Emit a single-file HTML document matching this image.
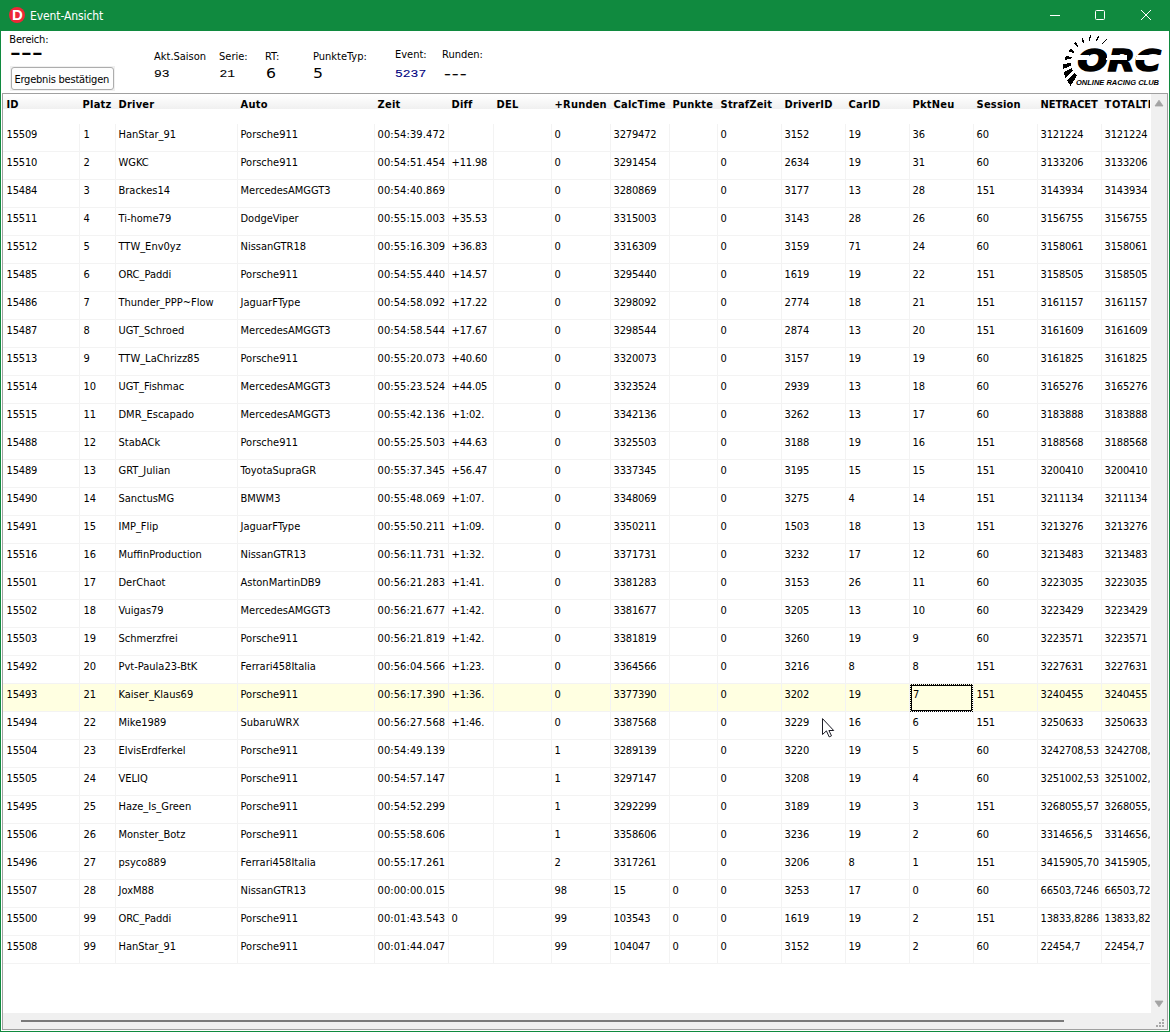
<!DOCTYPE html>
<html lang="de"><head><meta charset="utf-8"><title>Event-Ansicht</title>
<style>
html,body{margin:0;padding:0;}
body{width:1170px;height:1032px;overflow:hidden;background:#fff;font-family:"DejaVu Sans Condensed", "Liberation Sans", sans-serif;font-size:11px;color:#000;position:relative;}
#win{position:absolute;left:0;top:0;width:1170px;height:1032px;background:#108a3f;}
#client{position:absolute;left:1px;top:31px;width:1168px;height:1000px;background:#fff;}
#title{position:absolute;left:30px;top:8px;letter-spacing:-0.1px;font-size:12px;color:#fff;line-height:16px;white-space:nowrap;}
#icon{position:absolute;left:9px;top:7px;width:16px;height:16px;}
.cap{position:absolute;top:0;height:30px;width:46px;}
.lbl{position:absolute;white-space:nowrap;line-height:13px;font-size:11px;}
.mono{position:absolute;white-space:nowrap;font-family:"Liberation Mono",monospace;font-size:13px;line-height:14px;transform:scaleY(0.9);transform-origin:0 100%;-webkit-text-stroke:0.12px;}
.verd{position:absolute;white-space:nowrap;font-family:"DejaVu Sans",sans-serif;font-size:14px;line-height:16px;transform:scaleX(1.12);transform-origin:0 0;}
#btnwrap{position:absolute;left:10px;top:66px;width:105px;height:25px;background:#f0f0f0;}
#btn{position:absolute;left:1px;top:1px;width:101px;height:21px;border:1px solid #adadad;border-radius:3px;background:#fdfdfd;font-size:11px;line-height:23px;text-align:center;white-space:nowrap;letter-spacing:-0.22px;text-indent:-1.5px;}
#gridframe{position:absolute;left:2px;top:93px;width:1166px;height:937px;background:#f0f0f0;border-left:1px solid #a0a0a0;border-top:1px solid #a0a0a0;border-right:1px solid #a0a0a0;border-bottom:1px solid #a0a0a0;box-sizing:border-box;}
#grid{position:absolute;left:3px;top:94px;width:1148px;height:919px;background:#fff;}
#gridc{position:absolute;left:0;top:0;width:1147px;height:919px;overflow:hidden;}
#hdr{position:absolute;left:0;top:0;width:1147px;height:15px;background:linear-gradient(#fff 0,#fdfdfd 20%,#f0f0f0 100%);}
.h{position:absolute;top:0;height:16px;line-height:21px;font-weight:bold;font-size:11px;white-space:nowrap;overflow:hidden;box-sizing:border-box;padding-left:2.6px;letter-spacing:0.2px;}
.r{position:absolute;left:0;width:1163px;height:27px;border-bottom:1px solid #f3f3f3;}
.r.sel{background:#ffffe1;}
.n{letter-spacing:-0.15px;}
.c{position:absolute;top:0;height:27px;line-height:21px;padding-top:0;box-sizing:border-box;border-right:1px solid #f3f3f3;padding-left:2.5px;white-space:nowrap;overflow:hidden;}
#focus{position:absolute;}
</style></head>
<body>
<div id="win">
<svg id="icon" viewBox="0 0 16 16"><circle cx="8" cy="8" r="8" fill="#ee2737"/><text x="8.3" y="13" text-anchor="middle" font-family="Liberation Sans, sans-serif" font-weight="bold" font-size="14" textLength="10.8" lengthAdjust="spacingAndGlyphs" fill="#fff">D</text></svg>
<div id="title">Event-Ansicht</div>
<svg class="cap" style="left:1032px" viewBox="0 0 46 30"><path d="M18 15.5h10" stroke="#fff" stroke-width="1" fill="none"/></svg>
<svg class="cap" style="left:1078px" viewBox="0 0 46 30"><rect x="17.5" y="10.5" width="9" height="9" rx="1" stroke="#fff" stroke-width="1" fill="none"/></svg>
<svg class="cap" style="left:1124px" viewBox="0 0 46 30"><path d="M17 10l10 10M27 10l-10 10" stroke="#fff" stroke-width="1" fill="none"/></svg>
<div id="client"></div>
<div class="lbl" style="left:9.3px;top:33px;letter-spacing:-0.2px">Bereich:</div>
<div class="mono" style="left:7px;top:43.5px;font-size:18px;font-weight:bold;line-height:20px;transform:scaleX(1.55);transform-origin:0 0;letter-spacing:-3.7px">---</div>
<div id="btnwrap"><div id="btn">Ergebnis bestätigen</div></div>
<div class="lbl" style="left:154px;top:50px">Akt.Saison</div>
<div class="mono" style="left:154px;top:67.1px">93</div>
<div class="lbl" style="left:219px;top:50px">Serie:</div>
<div class="mono" style="left:219.5px;top:67.1px">21</div>
<div class="lbl" style="left:265px;top:50px">RT:</div>
<div class="verd" style="left:266px;top:65px">6</div>
<div class="lbl" style="left:313px;top:50px">PunkteTyp:</div>
<div class="verd" style="left:313px;top:65px">5</div>
<div class="lbl" style="left:395px;top:48px">Event:</div>
<div class="mono" style="left:395px;top:67.1px;color:#000080">5237</div>
<div class="lbl" style="left:442px;top:48px">Runden:</div>
<div class="mono" style="left:441.5px;top:68px;transform:scaleX(1.4);transform-origin:0 0;letter-spacing:-2.2px">---</div>
<svg id="logo" style="position:absolute;left:1056px;top:32px;width:112px;height:60px" viewBox="0 0 112 60" shape-rendering="crispEdges">
<path d="M11.0 48.6L18.0 41.0L21.1 43.3L14.6 53.9ZM7.9 40.4L15.5 36.0L17.1 38.5L9.3 45.8ZM7.1 32.3L14.8 30.9L15.0 33.6L7.2 37.0ZM9.0 25.3L11.3 24.0L15.9 25.2L14.9 26.7L9.0 27.8ZM13.0 17.7L15.5 17.0L18.0 19.4L17.7 20.9L13.1 19.4ZM18.0 11.2L20.3 10.1L22.1 14.6L21.1 15.1ZM26.0 6.1L27.1 6.1L28.1 10.4L27.2 10.7L26.0 9.0ZM34.0 2.9L35.1 3.1L34.1 8.7L32.9 8.7ZM42.0 3.9L43.1 4.4L41.0 8.7L39.9 8.4ZM50.4 6.9L51.2 7.4L46.4 12.1L45.8 11.5Z" fill="#000"/>
<text x="21.5" y="39.4" font-family="DejaVu Sans, sans-serif" font-weight="bold" font-style="oblique" font-size="30.4" textLength="83.5" lengthAdjust="spacingAndGlyphs" fill="#000" stroke="#000" stroke-width="1.5">ORC</text>
<path d="M19 27.8L32 27.8L33.2 22.8L20.5 22.8Z M50 27.8L70.5 27.8L71.5 22.8L51.5 22.8Z M80 27.8L106 27.8L107 22.8L81 22.8Z" fill="#fff"/>
<text x="20" y="52.6" font-family="Liberation Sans, sans-serif" font-weight="bold" font-style="italic" font-size="7.2" textLength="83" lengthAdjust="spacingAndGlyphs" fill="#000">ONLINE RACING CLUB</text>
</svg>
<div id="gridframe"></div>
<div id="grid"><div id="gridc">
<div id="hdr">
<div class="h" style="left:0px;width:77px;padding-left:3.4px">ID</div>
<div class="h" style="left:77px;width:36px">Platz</div>
<div class="h" style="left:113px;width:122px">Driver</div>
<div class="h" style="left:235px;width:137px">Auto</div>
<div class="h" style="left:372px;width:74px">Zeit</div>
<div class="h" style="left:446px;width:45px">Diff</div>
<div class="h" style="left:491px;width:58px">DEL</div>
<div class="h" style="left:549px;width:59px">+Runden</div>
<div class="h" style="left:608px;width:59px">CalcTime</div>
<div class="h" style="left:667px;width:48px">Punkte</div>
<div class="h" style="left:715px;width:64px">StrafZeit</div>
<div class="h" style="left:779px;width:64px">DriverID</div>
<div class="h" style="left:843px;width:64px">CarID</div>
<div class="h" style="left:907px;width:64px">PktNeu</div>
<div class="h" style="left:971px;width:64px">Session</div>
<div class="h" style="left:1035px;width:64px;letter-spacing:-0.1px">NETRACET</div>
<div class="h" style="left:1099px;width:64px;letter-spacing:0.55px">TOTALTIME</div>
</div>
<div class="r" style="top:30px"><div class="c n" style="left:0px;width:77px;padding-left:3.5px">15509</div><div class="c n" style="left:77px;width:36px;padding-left:3.5px">1</div><div class="c" style="left:113px;width:122px">HanStar_91</div><div class="c" style="left:235px;width:137px">Porsche911</div><div class="c" style="left:372px;width:74px;letter-spacing:0.1px">00:54:39.472</div><div class="c n" style="left:446px;width:45px"></div><div class="c n" style="left:491px;width:58px"></div><div class="c n" style="left:549px;width:59px">0</div><div class="c n" style="left:608px;width:59px">3279472</div><div class="c n" style="left:667px;width:48px"></div><div class="c n" style="left:715px;width:64px">0</div><div class="c n" style="left:779px;width:64px">3152</div><div class="c n" style="left:843px;width:64px">19</div><div class="c n" style="left:907px;width:64px">36</div><div class="c n" style="left:971px;width:64px">60</div><div class="c n" style="left:1035px;width:64px">3121224</div><div class="c n" style="left:1099px;width:64px">3121224</div></div>
<div class="r" style="top:58px"><div class="c n" style="left:0px;width:77px;padding-left:3.5px">15510</div><div class="c n" style="left:77px;width:36px;padding-left:3.5px">2</div><div class="c" style="left:113px;width:122px">WGKC</div><div class="c" style="left:235px;width:137px">Porsche911</div><div class="c" style="left:372px;width:74px;letter-spacing:0.1px">00:54:51.454</div><div class="c n" style="left:446px;width:45px">+11.98</div><div class="c n" style="left:491px;width:58px"></div><div class="c n" style="left:549px;width:59px">0</div><div class="c n" style="left:608px;width:59px">3291454</div><div class="c n" style="left:667px;width:48px"></div><div class="c n" style="left:715px;width:64px">0</div><div class="c n" style="left:779px;width:64px">2634</div><div class="c n" style="left:843px;width:64px">19</div><div class="c n" style="left:907px;width:64px">31</div><div class="c n" style="left:971px;width:64px">60</div><div class="c n" style="left:1035px;width:64px">3133206</div><div class="c n" style="left:1099px;width:64px">3133206</div></div>
<div class="r" style="top:86px"><div class="c n" style="left:0px;width:77px;padding-left:3.5px">15484</div><div class="c n" style="left:77px;width:36px;padding-left:3.5px">3</div><div class="c" style="left:113px;width:122px">Brackes14</div><div class="c" style="left:235px;width:137px">MercedesAMGGT3</div><div class="c" style="left:372px;width:74px;letter-spacing:0.1px">00:54:40.869</div><div class="c n" style="left:446px;width:45px"></div><div class="c n" style="left:491px;width:58px"></div><div class="c n" style="left:549px;width:59px">0</div><div class="c n" style="left:608px;width:59px">3280869</div><div class="c n" style="left:667px;width:48px"></div><div class="c n" style="left:715px;width:64px">0</div><div class="c n" style="left:779px;width:64px">3177</div><div class="c n" style="left:843px;width:64px">13</div><div class="c n" style="left:907px;width:64px">28</div><div class="c n" style="left:971px;width:64px">151</div><div class="c n" style="left:1035px;width:64px">3143934</div><div class="c n" style="left:1099px;width:64px">3143934</div></div>
<div class="r" style="top:114px"><div class="c n" style="left:0px;width:77px;padding-left:3.5px">15511</div><div class="c n" style="left:77px;width:36px;padding-left:3.5px">4</div><div class="c" style="left:113px;width:122px">Ti-home79</div><div class="c" style="left:235px;width:137px">DodgeViper</div><div class="c" style="left:372px;width:74px;letter-spacing:0.1px">00:55:15.003</div><div class="c n" style="left:446px;width:45px">+35.53</div><div class="c n" style="left:491px;width:58px"></div><div class="c n" style="left:549px;width:59px">0</div><div class="c n" style="left:608px;width:59px">3315003</div><div class="c n" style="left:667px;width:48px"></div><div class="c n" style="left:715px;width:64px">0</div><div class="c n" style="left:779px;width:64px">3143</div><div class="c n" style="left:843px;width:64px">28</div><div class="c n" style="left:907px;width:64px">26</div><div class="c n" style="left:971px;width:64px">60</div><div class="c n" style="left:1035px;width:64px">3156755</div><div class="c n" style="left:1099px;width:64px">3156755</div></div>
<div class="r" style="top:142px"><div class="c n" style="left:0px;width:77px;padding-left:3.5px">15512</div><div class="c n" style="left:77px;width:36px;padding-left:3.5px">5</div><div class="c" style="left:113px;width:122px">TTW_Env0yz</div><div class="c" style="left:235px;width:137px">NissanGTR18</div><div class="c" style="left:372px;width:74px;letter-spacing:0.1px">00:55:16.309</div><div class="c n" style="left:446px;width:45px">+36.83</div><div class="c n" style="left:491px;width:58px"></div><div class="c n" style="left:549px;width:59px">0</div><div class="c n" style="left:608px;width:59px">3316309</div><div class="c n" style="left:667px;width:48px"></div><div class="c n" style="left:715px;width:64px">0</div><div class="c n" style="left:779px;width:64px">3159</div><div class="c n" style="left:843px;width:64px">71</div><div class="c n" style="left:907px;width:64px">24</div><div class="c n" style="left:971px;width:64px">60</div><div class="c n" style="left:1035px;width:64px">3158061</div><div class="c n" style="left:1099px;width:64px">3158061</div></div>
<div class="r" style="top:170px"><div class="c n" style="left:0px;width:77px;padding-left:3.5px">15485</div><div class="c n" style="left:77px;width:36px;padding-left:3.5px">6</div><div class="c" style="left:113px;width:122px">ORC_Paddi</div><div class="c" style="left:235px;width:137px">Porsche911</div><div class="c" style="left:372px;width:74px;letter-spacing:0.1px">00:54:55.440</div><div class="c n" style="left:446px;width:45px">+14.57</div><div class="c n" style="left:491px;width:58px"></div><div class="c n" style="left:549px;width:59px">0</div><div class="c n" style="left:608px;width:59px">3295440</div><div class="c n" style="left:667px;width:48px"></div><div class="c n" style="left:715px;width:64px">0</div><div class="c n" style="left:779px;width:64px">1619</div><div class="c n" style="left:843px;width:64px">19</div><div class="c n" style="left:907px;width:64px">22</div><div class="c n" style="left:971px;width:64px">151</div><div class="c n" style="left:1035px;width:64px">3158505</div><div class="c n" style="left:1099px;width:64px">3158505</div></div>
<div class="r" style="top:198px"><div class="c n" style="left:0px;width:77px;padding-left:3.5px">15486</div><div class="c n" style="left:77px;width:36px;padding-left:3.5px">7</div><div class="c" style="left:113px;width:122px">Thunder_PPP~Flow</div><div class="c" style="left:235px;width:137px">JaguarFType</div><div class="c" style="left:372px;width:74px;letter-spacing:0.1px">00:54:58.092</div><div class="c n" style="left:446px;width:45px">+17.22</div><div class="c n" style="left:491px;width:58px"></div><div class="c n" style="left:549px;width:59px">0</div><div class="c n" style="left:608px;width:59px">3298092</div><div class="c n" style="left:667px;width:48px"></div><div class="c n" style="left:715px;width:64px">0</div><div class="c n" style="left:779px;width:64px">2774</div><div class="c n" style="left:843px;width:64px">18</div><div class="c n" style="left:907px;width:64px">21</div><div class="c n" style="left:971px;width:64px">151</div><div class="c n" style="left:1035px;width:64px">3161157</div><div class="c n" style="left:1099px;width:64px">3161157</div></div>
<div class="r" style="top:226px"><div class="c n" style="left:0px;width:77px;padding-left:3.5px">15487</div><div class="c n" style="left:77px;width:36px;padding-left:3.5px">8</div><div class="c" style="left:113px;width:122px">UGT_Schroed</div><div class="c" style="left:235px;width:137px">MercedesAMGGT3</div><div class="c" style="left:372px;width:74px;letter-spacing:0.1px">00:54:58.544</div><div class="c n" style="left:446px;width:45px">+17.67</div><div class="c n" style="left:491px;width:58px"></div><div class="c n" style="left:549px;width:59px">0</div><div class="c n" style="left:608px;width:59px">3298544</div><div class="c n" style="left:667px;width:48px"></div><div class="c n" style="left:715px;width:64px">0</div><div class="c n" style="left:779px;width:64px">2874</div><div class="c n" style="left:843px;width:64px">13</div><div class="c n" style="left:907px;width:64px">20</div><div class="c n" style="left:971px;width:64px">151</div><div class="c n" style="left:1035px;width:64px">3161609</div><div class="c n" style="left:1099px;width:64px">3161609</div></div>
<div class="r" style="top:254px"><div class="c n" style="left:0px;width:77px;padding-left:3.5px">15513</div><div class="c n" style="left:77px;width:36px;padding-left:3.5px">9</div><div class="c" style="left:113px;width:122px">TTW_LaChrizz85</div><div class="c" style="left:235px;width:137px">Porsche911</div><div class="c" style="left:372px;width:74px;letter-spacing:0.1px">00:55:20.073</div><div class="c n" style="left:446px;width:45px">+40.60</div><div class="c n" style="left:491px;width:58px"></div><div class="c n" style="left:549px;width:59px">0</div><div class="c n" style="left:608px;width:59px">3320073</div><div class="c n" style="left:667px;width:48px"></div><div class="c n" style="left:715px;width:64px">0</div><div class="c n" style="left:779px;width:64px">3157</div><div class="c n" style="left:843px;width:64px">19</div><div class="c n" style="left:907px;width:64px">19</div><div class="c n" style="left:971px;width:64px">60</div><div class="c n" style="left:1035px;width:64px">3161825</div><div class="c n" style="left:1099px;width:64px">3161825</div></div>
<div class="r" style="top:282px"><div class="c n" style="left:0px;width:77px;padding-left:3.5px">15514</div><div class="c n" style="left:77px;width:36px;padding-left:3.5px">10</div><div class="c" style="left:113px;width:122px">UGT_Fishmac</div><div class="c" style="left:235px;width:137px">MercedesAMGGT3</div><div class="c" style="left:372px;width:74px;letter-spacing:0.1px">00:55:23.524</div><div class="c n" style="left:446px;width:45px">+44.05</div><div class="c n" style="left:491px;width:58px"></div><div class="c n" style="left:549px;width:59px">0</div><div class="c n" style="left:608px;width:59px">3323524</div><div class="c n" style="left:667px;width:48px"></div><div class="c n" style="left:715px;width:64px">0</div><div class="c n" style="left:779px;width:64px">2939</div><div class="c n" style="left:843px;width:64px">13</div><div class="c n" style="left:907px;width:64px">18</div><div class="c n" style="left:971px;width:64px">60</div><div class="c n" style="left:1035px;width:64px">3165276</div><div class="c n" style="left:1099px;width:64px">3165276</div></div>
<div class="r" style="top:310px"><div class="c n" style="left:0px;width:77px;padding-left:3.5px">15515</div><div class="c n" style="left:77px;width:36px;padding-left:3.5px">11</div><div class="c" style="left:113px;width:122px">DMR_Escapado</div><div class="c" style="left:235px;width:137px">MercedesAMGGT3</div><div class="c" style="left:372px;width:74px;letter-spacing:0.1px">00:55:42.136</div><div class="c n" style="left:446px;width:45px">+1:02.</div><div class="c n" style="left:491px;width:58px"></div><div class="c n" style="left:549px;width:59px">0</div><div class="c n" style="left:608px;width:59px">3342136</div><div class="c n" style="left:667px;width:48px"></div><div class="c n" style="left:715px;width:64px">0</div><div class="c n" style="left:779px;width:64px">3262</div><div class="c n" style="left:843px;width:64px">13</div><div class="c n" style="left:907px;width:64px">17</div><div class="c n" style="left:971px;width:64px">60</div><div class="c n" style="left:1035px;width:64px">3183888</div><div class="c n" style="left:1099px;width:64px">3183888</div></div>
<div class="r" style="top:338px"><div class="c n" style="left:0px;width:77px;padding-left:3.5px">15488</div><div class="c n" style="left:77px;width:36px;padding-left:3.5px">12</div><div class="c" style="left:113px;width:122px">StabACk</div><div class="c" style="left:235px;width:137px">Porsche911</div><div class="c" style="left:372px;width:74px;letter-spacing:0.1px">00:55:25.503</div><div class="c n" style="left:446px;width:45px">+44.63</div><div class="c n" style="left:491px;width:58px"></div><div class="c n" style="left:549px;width:59px">0</div><div class="c n" style="left:608px;width:59px">3325503</div><div class="c n" style="left:667px;width:48px"></div><div class="c n" style="left:715px;width:64px">0</div><div class="c n" style="left:779px;width:64px">3188</div><div class="c n" style="left:843px;width:64px">19</div><div class="c n" style="left:907px;width:64px">16</div><div class="c n" style="left:971px;width:64px">151</div><div class="c n" style="left:1035px;width:64px">3188568</div><div class="c n" style="left:1099px;width:64px">3188568</div></div>
<div class="r" style="top:366px"><div class="c n" style="left:0px;width:77px;padding-left:3.5px">15489</div><div class="c n" style="left:77px;width:36px;padding-left:3.5px">13</div><div class="c" style="left:113px;width:122px">GRT_Julian</div><div class="c" style="left:235px;width:137px">ToyotaSupraGR</div><div class="c" style="left:372px;width:74px;letter-spacing:0.1px">00:55:37.345</div><div class="c n" style="left:446px;width:45px">+56.47</div><div class="c n" style="left:491px;width:58px"></div><div class="c n" style="left:549px;width:59px">0</div><div class="c n" style="left:608px;width:59px">3337345</div><div class="c n" style="left:667px;width:48px"></div><div class="c n" style="left:715px;width:64px">0</div><div class="c n" style="left:779px;width:64px">3195</div><div class="c n" style="left:843px;width:64px">15</div><div class="c n" style="left:907px;width:64px">15</div><div class="c n" style="left:971px;width:64px">151</div><div class="c n" style="left:1035px;width:64px">3200410</div><div class="c n" style="left:1099px;width:64px">3200410</div></div>
<div class="r" style="top:394px"><div class="c n" style="left:0px;width:77px;padding-left:3.5px">15490</div><div class="c n" style="left:77px;width:36px;padding-left:3.5px">14</div><div class="c" style="left:113px;width:122px">SanctusMG</div><div class="c" style="left:235px;width:137px">BMWM3</div><div class="c" style="left:372px;width:74px;letter-spacing:0.1px">00:55:48.069</div><div class="c n" style="left:446px;width:45px">+1:07.</div><div class="c n" style="left:491px;width:58px"></div><div class="c n" style="left:549px;width:59px">0</div><div class="c n" style="left:608px;width:59px">3348069</div><div class="c n" style="left:667px;width:48px"></div><div class="c n" style="left:715px;width:64px">0</div><div class="c n" style="left:779px;width:64px">3275</div><div class="c n" style="left:843px;width:64px">4</div><div class="c n" style="left:907px;width:64px">14</div><div class="c n" style="left:971px;width:64px">151</div><div class="c n" style="left:1035px;width:64px">3211134</div><div class="c n" style="left:1099px;width:64px">3211134</div></div>
<div class="r" style="top:422px"><div class="c n" style="left:0px;width:77px;padding-left:3.5px">15491</div><div class="c n" style="left:77px;width:36px;padding-left:3.5px">15</div><div class="c" style="left:113px;width:122px">IMP_Flip</div><div class="c" style="left:235px;width:137px">JaguarFType</div><div class="c" style="left:372px;width:74px;letter-spacing:0.1px">00:55:50.211</div><div class="c n" style="left:446px;width:45px">+1:09.</div><div class="c n" style="left:491px;width:58px"></div><div class="c n" style="left:549px;width:59px">0</div><div class="c n" style="left:608px;width:59px">3350211</div><div class="c n" style="left:667px;width:48px"></div><div class="c n" style="left:715px;width:64px">0</div><div class="c n" style="left:779px;width:64px">1503</div><div class="c n" style="left:843px;width:64px">18</div><div class="c n" style="left:907px;width:64px">13</div><div class="c n" style="left:971px;width:64px">151</div><div class="c n" style="left:1035px;width:64px">3213276</div><div class="c n" style="left:1099px;width:64px">3213276</div></div>
<div class="r" style="top:450px"><div class="c n" style="left:0px;width:77px;padding-left:3.5px">15516</div><div class="c n" style="left:77px;width:36px;padding-left:3.5px">16</div><div class="c" style="left:113px;width:122px">MuffinProduction</div><div class="c" style="left:235px;width:137px">NissanGTR13</div><div class="c" style="left:372px;width:74px;letter-spacing:0.1px">00:56:11.731</div><div class="c n" style="left:446px;width:45px">+1:32.</div><div class="c n" style="left:491px;width:58px"></div><div class="c n" style="left:549px;width:59px">0</div><div class="c n" style="left:608px;width:59px">3371731</div><div class="c n" style="left:667px;width:48px"></div><div class="c n" style="left:715px;width:64px">0</div><div class="c n" style="left:779px;width:64px">3232</div><div class="c n" style="left:843px;width:64px">17</div><div class="c n" style="left:907px;width:64px">12</div><div class="c n" style="left:971px;width:64px">60</div><div class="c n" style="left:1035px;width:64px">3213483</div><div class="c n" style="left:1099px;width:64px">3213483</div></div>
<div class="r" style="top:478px"><div class="c n" style="left:0px;width:77px;padding-left:3.5px">15501</div><div class="c n" style="left:77px;width:36px;padding-left:3.5px">17</div><div class="c" style="left:113px;width:122px">DerChaot</div><div class="c" style="left:235px;width:137px">AstonMartinDB9</div><div class="c" style="left:372px;width:74px;letter-spacing:0.1px">00:56:21.283</div><div class="c n" style="left:446px;width:45px">+1:41.</div><div class="c n" style="left:491px;width:58px"></div><div class="c n" style="left:549px;width:59px">0</div><div class="c n" style="left:608px;width:59px">3381283</div><div class="c n" style="left:667px;width:48px"></div><div class="c n" style="left:715px;width:64px">0</div><div class="c n" style="left:779px;width:64px">3153</div><div class="c n" style="left:843px;width:64px">26</div><div class="c n" style="left:907px;width:64px">11</div><div class="c n" style="left:971px;width:64px">60</div><div class="c n" style="left:1035px;width:64px">3223035</div><div class="c n" style="left:1099px;width:64px">3223035</div></div>
<div class="r" style="top:506px"><div class="c n" style="left:0px;width:77px;padding-left:3.5px">15502</div><div class="c n" style="left:77px;width:36px;padding-left:3.5px">18</div><div class="c" style="left:113px;width:122px">Vuigas79</div><div class="c" style="left:235px;width:137px">MercedesAMGGT3</div><div class="c" style="left:372px;width:74px;letter-spacing:0.1px">00:56:21.677</div><div class="c n" style="left:446px;width:45px">+1:42.</div><div class="c n" style="left:491px;width:58px"></div><div class="c n" style="left:549px;width:59px">0</div><div class="c n" style="left:608px;width:59px">3381677</div><div class="c n" style="left:667px;width:48px"></div><div class="c n" style="left:715px;width:64px">0</div><div class="c n" style="left:779px;width:64px">3205</div><div class="c n" style="left:843px;width:64px">13</div><div class="c n" style="left:907px;width:64px">10</div><div class="c n" style="left:971px;width:64px">60</div><div class="c n" style="left:1035px;width:64px">3223429</div><div class="c n" style="left:1099px;width:64px">3223429</div></div>
<div class="r" style="top:534px"><div class="c n" style="left:0px;width:77px;padding-left:3.5px">15503</div><div class="c n" style="left:77px;width:36px;padding-left:3.5px">19</div><div class="c" style="left:113px;width:122px">Schmerzfrei</div><div class="c" style="left:235px;width:137px">Porsche911</div><div class="c" style="left:372px;width:74px;letter-spacing:0.1px">00:56:21.819</div><div class="c n" style="left:446px;width:45px">+1:42.</div><div class="c n" style="left:491px;width:58px"></div><div class="c n" style="left:549px;width:59px">0</div><div class="c n" style="left:608px;width:59px">3381819</div><div class="c n" style="left:667px;width:48px"></div><div class="c n" style="left:715px;width:64px">0</div><div class="c n" style="left:779px;width:64px">3260</div><div class="c n" style="left:843px;width:64px">19</div><div class="c n" style="left:907px;width:64px">9</div><div class="c n" style="left:971px;width:64px">60</div><div class="c n" style="left:1035px;width:64px">3223571</div><div class="c n" style="left:1099px;width:64px">3223571</div></div>
<div class="r" style="top:562px"><div class="c n" style="left:0px;width:77px;padding-left:3.5px">15492</div><div class="c n" style="left:77px;width:36px;padding-left:3.5px">20</div><div class="c" style="left:113px;width:122px">Pvt-Paula23-BtK</div><div class="c" style="left:235px;width:137px">Ferrari458Italia</div><div class="c" style="left:372px;width:74px;letter-spacing:0.1px">00:56:04.566</div><div class="c n" style="left:446px;width:45px">+1:23.</div><div class="c n" style="left:491px;width:58px"></div><div class="c n" style="left:549px;width:59px">0</div><div class="c n" style="left:608px;width:59px">3364566</div><div class="c n" style="left:667px;width:48px"></div><div class="c n" style="left:715px;width:64px">0</div><div class="c n" style="left:779px;width:64px">3216</div><div class="c n" style="left:843px;width:64px">8</div><div class="c n" style="left:907px;width:64px">8</div><div class="c n" style="left:971px;width:64px">151</div><div class="c n" style="left:1035px;width:64px">3227631</div><div class="c n" style="left:1099px;width:64px">3227631</div></div>
<div class="r sel" style="top:590px"><div class="c n" style="left:0px;width:77px;padding-left:3.5px">15493</div><div class="c n" style="left:77px;width:36px;padding-left:3.5px">21</div><div class="c" style="left:113px;width:122px">Kaiser_Klaus69</div><div class="c" style="left:235px;width:137px">Porsche911</div><div class="c" style="left:372px;width:74px;letter-spacing:0.1px">00:56:17.390</div><div class="c n" style="left:446px;width:45px">+1:36.</div><div class="c n" style="left:491px;width:58px"></div><div class="c n" style="left:549px;width:59px">0</div><div class="c n" style="left:608px;width:59px">3377390</div><div class="c n" style="left:667px;width:48px"></div><div class="c n" style="left:715px;width:64px">0</div><div class="c n" style="left:779px;width:64px">3202</div><div class="c n" style="left:843px;width:64px">19</div><div class="c n" style="left:907px;width:64px">7</div><div class="c n" style="left:971px;width:64px">151</div><div class="c n" style="left:1035px;width:64px">3240455</div><div class="c n" style="left:1099px;width:64px">3240455</div></div>
<div class="r" style="top:618px"><div class="c n" style="left:0px;width:77px;padding-left:3.5px">15494</div><div class="c n" style="left:77px;width:36px;padding-left:3.5px">22</div><div class="c" style="left:113px;width:122px">Mike1989</div><div class="c" style="left:235px;width:137px">SubaruWRX</div><div class="c" style="left:372px;width:74px;letter-spacing:0.1px">00:56:27.568</div><div class="c n" style="left:446px;width:45px">+1:46.</div><div class="c n" style="left:491px;width:58px"></div><div class="c n" style="left:549px;width:59px">0</div><div class="c n" style="left:608px;width:59px">3387568</div><div class="c n" style="left:667px;width:48px"></div><div class="c n" style="left:715px;width:64px">0</div><div class="c n" style="left:779px;width:64px">3229</div><div class="c n" style="left:843px;width:64px">16</div><div class="c n" style="left:907px;width:64px">6</div><div class="c n" style="left:971px;width:64px">151</div><div class="c n" style="left:1035px;width:64px">3250633</div><div class="c n" style="left:1099px;width:64px">3250633</div></div>
<div class="r" style="top:646px"><div class="c n" style="left:0px;width:77px;padding-left:3.5px">15504</div><div class="c n" style="left:77px;width:36px;padding-left:3.5px">23</div><div class="c" style="left:113px;width:122px">ElvisErdferkel</div><div class="c" style="left:235px;width:137px">Porsche911</div><div class="c" style="left:372px;width:74px;letter-spacing:0.1px">00:54:49.139</div><div class="c n" style="left:446px;width:45px"></div><div class="c n" style="left:491px;width:58px"></div><div class="c n" style="left:549px;width:59px">1</div><div class="c n" style="left:608px;width:59px">3289139</div><div class="c n" style="left:667px;width:48px"></div><div class="c n" style="left:715px;width:64px">0</div><div class="c n" style="left:779px;width:64px">3220</div><div class="c n" style="left:843px;width:64px">19</div><div class="c n" style="left:907px;width:64px">5</div><div class="c n" style="left:971px;width:64px">60</div><div class="c n" style="left:1035px;width:64px">3242708,53</div><div class="c n" style="left:1099px;width:64px">3242708,53</div></div>
<div class="r" style="top:674px"><div class="c n" style="left:0px;width:77px;padding-left:3.5px">15505</div><div class="c n" style="left:77px;width:36px;padding-left:3.5px">24</div><div class="c" style="left:113px;width:122px">VELIQ</div><div class="c" style="left:235px;width:137px">Porsche911</div><div class="c" style="left:372px;width:74px;letter-spacing:0.1px">00:54:57.147</div><div class="c n" style="left:446px;width:45px"></div><div class="c n" style="left:491px;width:58px"></div><div class="c n" style="left:549px;width:59px">1</div><div class="c n" style="left:608px;width:59px">3297147</div><div class="c n" style="left:667px;width:48px"></div><div class="c n" style="left:715px;width:64px">0</div><div class="c n" style="left:779px;width:64px">3208</div><div class="c n" style="left:843px;width:64px">19</div><div class="c n" style="left:907px;width:64px">4</div><div class="c n" style="left:971px;width:64px">60</div><div class="c n" style="left:1035px;width:64px">3251002,53</div><div class="c n" style="left:1099px;width:64px">3251002,53</div></div>
<div class="r" style="top:702px"><div class="c n" style="left:0px;width:77px;padding-left:3.5px">15495</div><div class="c n" style="left:77px;width:36px;padding-left:3.5px">25</div><div class="c" style="left:113px;width:122px">Haze_Is_Green</div><div class="c" style="left:235px;width:137px">Porsche911</div><div class="c" style="left:372px;width:74px;letter-spacing:0.1px">00:54:52.299</div><div class="c n" style="left:446px;width:45px"></div><div class="c n" style="left:491px;width:58px"></div><div class="c n" style="left:549px;width:59px">1</div><div class="c n" style="left:608px;width:59px">3292299</div><div class="c n" style="left:667px;width:48px"></div><div class="c n" style="left:715px;width:64px">0</div><div class="c n" style="left:779px;width:64px">3189</div><div class="c n" style="left:843px;width:64px">19</div><div class="c n" style="left:907px;width:64px">3</div><div class="c n" style="left:971px;width:64px">151</div><div class="c n" style="left:1035px;width:64px">3268055,57</div><div class="c n" style="left:1099px;width:64px">3268055,57</div></div>
<div class="r" style="top:730px"><div class="c n" style="left:0px;width:77px;padding-left:3.5px">15506</div><div class="c n" style="left:77px;width:36px;padding-left:3.5px">26</div><div class="c" style="left:113px;width:122px">Monster_Botz</div><div class="c" style="left:235px;width:137px">Porsche911</div><div class="c" style="left:372px;width:74px;letter-spacing:0.1px">00:55:58.606</div><div class="c n" style="left:446px;width:45px"></div><div class="c n" style="left:491px;width:58px"></div><div class="c n" style="left:549px;width:59px">1</div><div class="c n" style="left:608px;width:59px">3358606</div><div class="c n" style="left:667px;width:48px"></div><div class="c n" style="left:715px;width:64px">0</div><div class="c n" style="left:779px;width:64px">3236</div><div class="c n" style="left:843px;width:64px">19</div><div class="c n" style="left:907px;width:64px">2</div><div class="c n" style="left:971px;width:64px">60</div><div class="c n" style="left:1035px;width:64px">3314656,5</div><div class="c n" style="left:1099px;width:64px">3314656,5</div></div>
<div class="r" style="top:758px"><div class="c n" style="left:0px;width:77px;padding-left:3.5px">15496</div><div class="c n" style="left:77px;width:36px;padding-left:3.5px">27</div><div class="c" style="left:113px;width:122px">psyco889</div><div class="c" style="left:235px;width:137px">Ferrari458Italia</div><div class="c" style="left:372px;width:74px;letter-spacing:0.1px">00:55:17.261</div><div class="c n" style="left:446px;width:45px"></div><div class="c n" style="left:491px;width:58px"></div><div class="c n" style="left:549px;width:59px">2</div><div class="c n" style="left:608px;width:59px">3317261</div><div class="c n" style="left:667px;width:48px"></div><div class="c n" style="left:715px;width:64px">0</div><div class="c n" style="left:779px;width:64px">3206</div><div class="c n" style="left:843px;width:64px">8</div><div class="c n" style="left:907px;width:64px">1</div><div class="c n" style="left:971px;width:64px">151</div><div class="c n" style="left:1035px;width:64px">3415905,70</div><div class="c n" style="left:1099px;width:64px">3415905,70</div></div>
<div class="r" style="top:786px"><div class="c n" style="left:0px;width:77px;padding-left:3.5px">15507</div><div class="c n" style="left:77px;width:36px;padding-left:3.5px">28</div><div class="c" style="left:113px;width:122px">JoxM88</div><div class="c" style="left:235px;width:137px">NissanGTR13</div><div class="c" style="left:372px;width:74px;letter-spacing:0.1px">00:00:00.015</div><div class="c n" style="left:446px;width:45px"></div><div class="c n" style="left:491px;width:58px"></div><div class="c n" style="left:549px;width:59px">98</div><div class="c n" style="left:608px;width:59px">15</div><div class="c n" style="left:667px;width:48px">0</div><div class="c n" style="left:715px;width:64px">0</div><div class="c n" style="left:779px;width:64px">3253</div><div class="c n" style="left:843px;width:64px">17</div><div class="c n" style="left:907px;width:64px">0</div><div class="c n" style="left:971px;width:64px">60</div><div class="c n" style="left:1035px;width:64px">66503,7246</div><div class="c n" style="left:1099px;width:64px">66503,7246</div></div>
<div class="r" style="top:814px"><div class="c n" style="left:0px;width:77px;padding-left:3.5px">15500</div><div class="c n" style="left:77px;width:36px;padding-left:3.5px">99</div><div class="c" style="left:113px;width:122px">ORC_Paddi</div><div class="c" style="left:235px;width:137px">Porsche911</div><div class="c" style="left:372px;width:74px;letter-spacing:0.1px">00:01:43.543</div><div class="c n" style="left:446px;width:45px">0</div><div class="c n" style="left:491px;width:58px"></div><div class="c n" style="left:549px;width:59px">99</div><div class="c n" style="left:608px;width:59px">103543</div><div class="c n" style="left:667px;width:48px">0</div><div class="c n" style="left:715px;width:64px">0</div><div class="c n" style="left:779px;width:64px">1619</div><div class="c n" style="left:843px;width:64px">19</div><div class="c n" style="left:907px;width:64px">2</div><div class="c n" style="left:971px;width:64px">151</div><div class="c n" style="left:1035px;width:64px">13833,8286</div><div class="c n" style="left:1099px;width:64px">13833,8286</div></div>
<div class="r" style="top:842px"><div class="c n" style="left:0px;width:77px;padding-left:3.5px">15508</div><div class="c n" style="left:77px;width:36px;padding-left:3.5px">99</div><div class="c" style="left:113px;width:122px">HanStar_91</div><div class="c" style="left:235px;width:137px">Porsche911</div><div class="c" style="left:372px;width:74px;letter-spacing:0.1px">00:01:44.047</div><div class="c n" style="left:446px;width:45px"></div><div class="c n" style="left:491px;width:58px"></div><div class="c n" style="left:549px;width:59px">99</div><div class="c n" style="left:608px;width:59px">104047</div><div class="c n" style="left:667px;width:48px">0</div><div class="c n" style="left:715px;width:64px">0</div><div class="c n" style="left:779px;width:64px">3152</div><div class="c n" style="left:843px;width:64px">19</div><div class="c n" style="left:907px;width:64px">2</div><div class="c n" style="left:971px;width:64px">60</div><div class="c n" style="left:1035px;width:64px">22454,7</div><div class="c n" style="left:1099px;width:64px">22454,7</div></div>
</div></div>
<div style="position:absolute;left:910px;top:684px;width:63px;height:28px;box-sizing:border-box;background:repeating-conic-gradient(#000 0 25%,transparent 0 50%) 0 0/2px 2px;"></div>
<div style="position:absolute;left:911px;top:685px;width:61px;height:26px;box-sizing:border-box;border:1px solid #000;background:#ffffe1;"></div>
<div class="n" style="position:absolute;left:913px;top:684px;line-height:21px;font-size:11px;letter-spacing:-0.15px">7</div>
<svg style="position:absolute;left:1150px;top:94px;width:17px;height:919px" viewBox="0 0 17 919"><path d="M5 12L9 6.2L13 12Z" fill="#a3a3a3" stroke="#a3a3a3" stroke-width="0.8" stroke-linejoin="round"/><path d="M5 907L9 912.8L13 907Z" fill="#a3a3a3" stroke="#a3a3a3" stroke-width="0.8" stroke-linejoin="round"/></svg>
<div style="position:absolute;left:21px;top:1020px;width:1043px;height:2px;background:#7a7a7a"></div>
<svg style="position:absolute;left:1155px;top:1018px;width:10px;height:10px" viewBox="0 0 10 10" shape-rendering="crispEdges"><path d="M7 1h2v2h-2zM4 4h2v2h-2zM7 4h2v2h-2zM1 7h2v2h-2zM4 7h2v2h-2zM7 7h2v2h-2z" fill="#a8a8a8"/></svg>
<svg style="position:absolute;left:818px;top:714px;width:20px;height:26px" viewBox="818 714 20 26"><path d="M822.5 718.6L822.5 734.5L826.4 730.9L829.2 736.9L831.5 735.8L828.9 730.5L833.7 730.5Z" fill="#fff" stroke="#1a1a24" stroke-width="1" stroke-linejoin="round"/></svg>
</div>
</body></html>
